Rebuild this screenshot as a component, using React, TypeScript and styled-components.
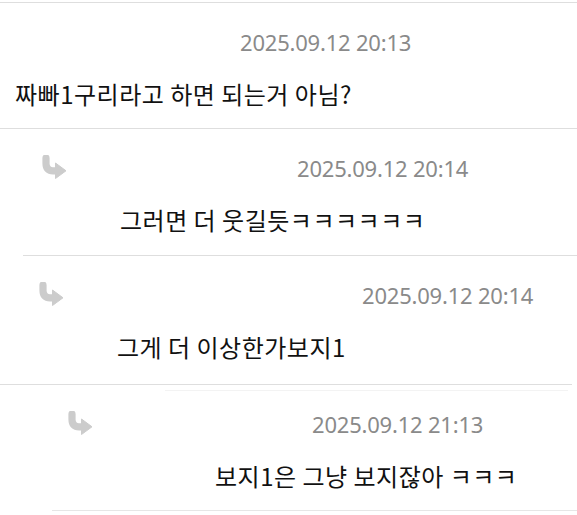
import React from "react";
import styled, { createGlobalStyle } from "styled-components";

const Global = createGlobalStyle`
  html, body { margin: 0; padding: 0; background: #ffffff; }
  body { width: 577px; height: 515px; overflow: hidden; }
`;

type Item = {
  date: string;
  text: string;
  height: number;
  ruleX: number;
  ruleW?: number;
  arrowX?: number;
  dateX: number;
  bodyX: number;
  seam?: boolean;
};

const items: Item[] = [
  { date: "2025.09.12 20:13", text: "짜빠1구리라고 하면 되는거 아님?", height: 126, ruleX: 0, dateX: 240, bodyX: 15 },
  { date: "2025.09.12 20:14", text: "그러면 더 웃길듯ㅋㅋㅋㅋㅋㅋ", height: 127, ruleX: 0, arrowX: 41, dateX: 297, bodyX: 120 },
  { date: "2025.09.12 20:14", text: "그게 더 이상한가보지1", height: 129, ruleX: 23, arrowX: 38, dateX: 362, bodyX: 117 },
  { date: "2025.09.12 21:13", text: "보지1은 그냥 보지잖아 ㅋㅋㅋ", height: 126, ruleX: 0, ruleW: 572, arrowX: 67, dateX: 312, bodyX: 215, seam: true },
];

const Thread = styled.div`
  display: flex;
  flex-direction: column;
  padding-top: 2px;
  width: 577px;
`;

const Comment = styled.section<{ $h: number }>`
  display: flex;
  flex-direction: column;
  height: ${(p) => p.$h}px;
  box-sizing: border-box;
`;

const Rule = styled.div<{ $x: number; $w?: number }>`
  margin-left: ${(p) => p.$x}px;
  width: ${(p) => (p.$w ? `${p.$w}px` : "auto")};
  border-top: 1px solid #dedede;
`;

const Seam = styled.div`
  margin: 5px 9px 0 165px;
  border-top: 1px solid #f3f3f3;
`;

const Header = styled.div<{ $top: number }>`
  display: flex;
  align-items: center;
  height: 30px;
  margin-top: ${(p) => p.$top}px;
`;

const Arrow = styled.svg<{ $x: number }>`
  flex-shrink: 0;
  width: 26px;
  height: 24px;
  margin-left: ${(p) => p.$x}px;
  margin-top: -3px;
`;

const DateText = styled.span<{ $x: number }>`
  margin-left: ${(p) => p.$x}px;
  font-family: "Noto Sans", "Noto Sans CJK KR", sans-serif;
  font-size: 22px;
  color: #8a8a8a;
  white-space: nowrap;
  letter-spacing: -0.2px;
`;

const Body = styled.p<{ $x: number }>`
  margin: 22px 0 0 ${(p) => p.$x}px;
  line-height: 30px;
  font-family: "Noto Sans CJK KR", "Noto Sans", sans-serif;
  font-size: 24px;
  letter-spacing: 0.5px;
  color: #111111;
  white-space: nowrap;
`;

const EndRule = styled.div`
  margin-left: 52px;
  border-top: 1px solid #e6e6e6;
`;

function ReplyIcon({ x }: { x: number }) {
  return (
    <Arrow $x={x} viewBox="0 0 26 24">
      <path
        d="M5 3 V8.5 Q5 15.8 12 15.8 H16"
        stroke="#cccccc"
        strokeWidth="7.2"
        fill="none"
        strokeLinecap="round"
      />
      <path d="M14.5 8 L25 15.8 L14.5 23.5 Z" fill="#cccccc" strokeLinejoin="round" stroke="#cccccc" strokeWidth="1" />
    </Arrow>
  );
}

export default function App() {
  return (
    <>
      <Global />
      <Thread>
        {items.map((it, i) => (
          <Comment key={i} $h={it.height}>
            <Rule $x={it.ruleX} $w={it.ruleW} />
            {it.seam && <Seam />}
            <Header $top={it.seam ? 18 : 24}>
              {it.arrowX !== undefined && <ReplyIcon x={it.arrowX} />}
              <DateText $x={it.arrowX !== undefined ? it.dateX - it.arrowX - 26 : it.dateX}>
                {it.date}
              </DateText>
            </Header>
            <Body $x={it.bodyX}>{it.text}</Body>
          </Comment>
        ))}
        <EndRule />
      </Thread>
    </>
  );
}
